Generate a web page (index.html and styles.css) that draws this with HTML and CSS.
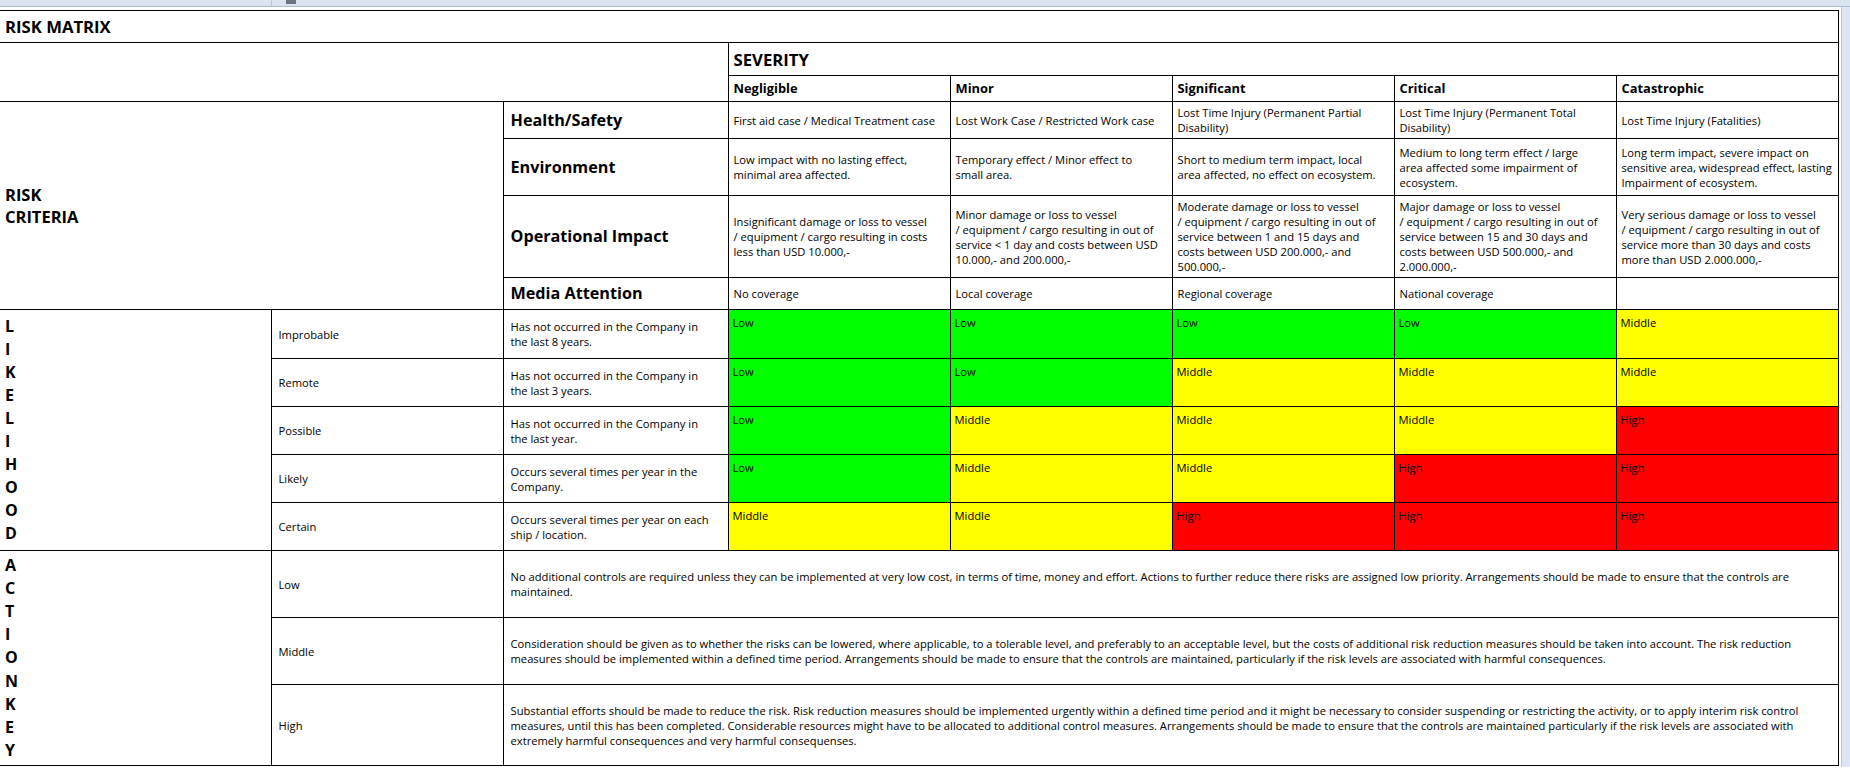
FILE: index.html
```html
<!DOCTYPE html>
<html lang="en">
<head>
<meta charset="utf-8">
<title>Risk Matrix</title>
<link rel="stylesheet" href="styles.css">
</head>
<body>
<div class="chrome"><span class="chrome-sep"></span><span class="chrome-tab"></span></div>
<div class="main">
  <div class="sheet">
    <table class="matrix">
      <colgroup>
        <col class="c0"><col class="c1"><col class="c2">
        <col class="cs"><col class="cs"><col class="cs"><col class="cs"><col class="cs">
      </colgroup>
      <tr class="r-title"><td colspan="8" class="title first">RISK MATRIX</td></tr>
      <tr class="r-sev"><td colspan="3" rowspan="2" class="first"></td><td colspan="5" class="sev">SEVERITY</td></tr>
      <tr class="r-head">
        <td class="head">Negligible</td><td class="head">Minor</td><td class="head">Significant</td><td class="head">Critical</td><td class="head">Catastrophic</td>
      </tr>
      <tr class="r-health">
        <td colspan="2" rowspan="4" class="criteria first">RISK<br>CRITERIA</td>
        <td class="cat">Health/Safety</td>
        <td>First aid case / Medical Treatment case</td>
        <td>Lost Work Case / Restricted Work case</td>
        <td>Lost Time Injury (Permanent Partial<br>Disability)</td>
        <td>Lost Time Injury (Permanent Total<br>Disability)</td>
        <td>Lost Time Injury (Fatalities)</td>
      </tr>
      <tr class="r-env">
        <td class="cat">Environment</td>
        <td>Low impact with no lasting effect,<br>minimal area affected.</td>
        <td>Temporary effect / Minor effect to<br>small area.</td>
        <td>Short to medium term impact, local<br>area affected, no effect on ecosystem.</td>
        <td>Medium to long term effect / large<br>area affected some impairment of<br>ecosystem.</td>
        <td>Long term impact, severe impact on<br>sensitive area, widespread effect, lasting<br>Impairment of ecosystem.</td>
      </tr>
      <tr class="r-ops">
        <td class="cat">Operational Impact</td>
        <td>Insignificant damage or loss to vessel<br>/ equipment / cargo resulting in costs<br>less than USD 10.000,-</td>
        <td>Minor damage or loss to vessel<br>/ equipment / cargo resulting in out of<br>service &lt; 1 day and costs between USD<br>10.000,- and 200.000,-</td>
        <td>Moderate damage or loss to vessel<br>/ equipment / cargo resulting in out of<br>service between 1 and 15 days and<br>costs between USD 200.000,- and<br>500.000,-</td>
        <td>Major damage or loss to vessel<br>/ equipment / cargo resulting in out of<br>service between 15 and 30 days and<br>costs between USD 500.000,- and<br>2.000.000,-</td>
        <td>Very serious damage or loss to vessel<br>/ equipment / cargo resulting in out of<br>service more than 30 days and costs<br>more than USD 2.000.000,-</td>
      </tr>
      <tr class="r-media">
        <td class="cat">Media Attention</td>
        <td>No coverage</td><td>Local coverage</td><td>Regional coverage</td><td>National coverage</td><td></td>
      </tr>
      <tr class="r-lik r-lik1">
        <td rowspan="5" class="vletters vl-lik first">L<br>I<br>K<br>E<br>L<br>I<br>H<br>O<br>O<br>D</td>
        <td class="label">Improbable</td>
        <td class="desc">Has not occurred in the Company in<br>the last 8 years.</td>
        <td class="risk low">Low</td><td class="risk low">Low</td><td class="risk low">Low</td><td class="risk low">Low</td><td class="risk mid">Middle</td>
      </tr>
      <tr class="r-lik">
        <td class="label">Remote</td>
        <td class="desc">Has not occurred in the Company in<br>the last 3 years.</td>
        <td class="risk low">Low</td><td class="risk low">Low</td><td class="risk mid">Middle</td><td class="risk mid">Middle</td><td class="risk mid">Middle</td>
      </tr>
      <tr class="r-lik">
        <td class="label">Possible</td>
        <td class="desc">Has not occurred in the Company in<br>the last year.</td>
        <td class="risk low">Low</td><td class="risk mid">Middle</td><td class="risk mid">Middle</td><td class="risk mid">Middle</td><td class="risk high">High</td>
      </tr>
      <tr class="r-lik">
        <td class="label">Likely</td>
        <td class="desc">Occurs several times per year in the<br>Company.</td>
        <td class="risk low">Low</td><td class="risk mid">Middle</td><td class="risk mid">Middle</td><td class="risk high">High</td><td class="risk high">High</td>
      </tr>
      <tr class="r-lik">
        <td class="label">Certain</td>
        <td class="desc">Occurs several times per year on each<br>ship / location.</td>
        <td class="risk mid">Middle</td><td class="risk mid">Middle</td><td class="risk high">High</td><td class="risk high">High</td><td class="risk high">High</td>
      </tr>
      <tr class="r-act">
        <td rowspan="3" class="vletters vl-act first">A<br>C<br>T<br>I<br>O<br>N<br>K<br>E<br>Y</td>
        <td class="label">Low</td>
        <td colspan="6" class="desc">No additional controls are required unless they can be implemented at very low cost, in terms of time, money and effort. Actions to further reduce there risks are assigned low priority. Arrangements should be made to ensure that the controls are<br>maintained.</td>
      </tr>
      <tr class="r-act">
        <td class="label">Middle</td>
        <td colspan="6" class="desc">Consideration should be given as to whether the risks can be lowered, where applicable, to a tolerable level, and preferably to an acceptable level, but the costs of additional risk reduction measures should be taken into account. The risk reduction<br>measures should be implemented within a defined time period. Arrangements should be made to ensure that the controls are maintained, particularly if the risk levels are associated with harmful consequences.</td>
      </tr>
      <tr class="r-act-last">
        <td class="label">High</td>
        <td colspan="6" class="desc">Substantial efforts should be made to reduce the risk. Risk reduction measures should be implemented urgently within a defined time period and it might be necessary to consider suspending or restricting the activity, or to apply interim risk control<br>measures, until this has been completed. Considerable resources might have to be allocated to additional control measures. Arrangements should be made to ensure that the controls are maintained particularly if the risk levels are associated with<br>extremely harmful consequences and very harmful consequenses.</td>
      </tr>
    </table>
  </div>
  <div class="vscroll"></div>
</div>
</body>
</html>
```

FILE: styles.css
```css
* { box-sizing: border-box; }
html, body {
  margin: 0;
  padding: 0;
  background: #ffffff;
  width: 1850px;
  height: 768px;
  overflow: hidden;
}
body {
  font-family: "Open Sans", "Noto Sans", "DejaVu Sans", sans-serif;
  font-size: 11.2px;
  line-height: 15px;
  color: #000;
}
.chrome {
  height: 7px;
  background: #dae4f1;
  border-bottom: 1px solid #a9bdd6;
  display: flex;
  align-items: stretch;
  padding-left: 271px;
}
.chrome-sep {
  width: 1px;
  background: #b7c5d8;
}
.chrome-tab {
  width: 10px;
  height: 4px;
  margin-left: 14px;
  background: #6b7380;
}
.main {
  display: flex;
  padding-top: 3px;
}
.sheet {
  width: 1841px;
}
.vscroll {
  width: 9px;
  margin-top: -3px;
  height: 760px;
  background: #dde6f2;
  border-left: 1px solid #b9c8dc;
}
.matrix {
  border-collapse: collapse;
  table-layout: fixed;
  width: 1837px;
}
.c0 { width: 271px; }
.c1 { width: 232px; }
.c2 { width: 225px; }
.cs { width: 222px; }
.matrix td {
  border: 1px solid #000;
  padding: 0 5px;
  vertical-align: middle;
  text-align: left;
  overflow: hidden;
}
.matrix td.first { border-left: none; }
.matrix td.label { padding-left: 7px; }
.matrix td.desc { padding-left: 7px; }
.r-title { height: 32px; }
.r-sev { height: 33px; }
.r-head { height: 26px; }
.r-health { height: 37px; }
.r-env { height: 57px; }
.r-ops { height: 82px; }
.r-media { height: 32px; }
.r-lik { height: 48px; }
.r-lik1 { height: 49px; }
.r-act { height: 67px; }
.r-act-last { height: 81px; }
.title, .sev {
  font-weight: 700;
  font-size: 16.7px;
}
.head {
  font-weight: 700;
  font-size: 12.9px;
}
.matrix td.cat {
  font-weight: 700;
  font-size: 16.2px;
  padding-left: 7px;
}
.criteria {
  font-weight: 700;
  font-size: 16.5px;
  line-height: 22px;
}
.vletters {
  font-weight: 700;
  font-size: 16px;
}
.vl-lik { line-height: 22.9px; }
.vl-act { line-height: 23.2px; }
.matrix td.risk {
  vertical-align: top;
  padding: 5px 4px 0;
}
.low { background: #00ff00; }
.mid { background: #ffff00; }
.high { background: #ff0000; }
```
